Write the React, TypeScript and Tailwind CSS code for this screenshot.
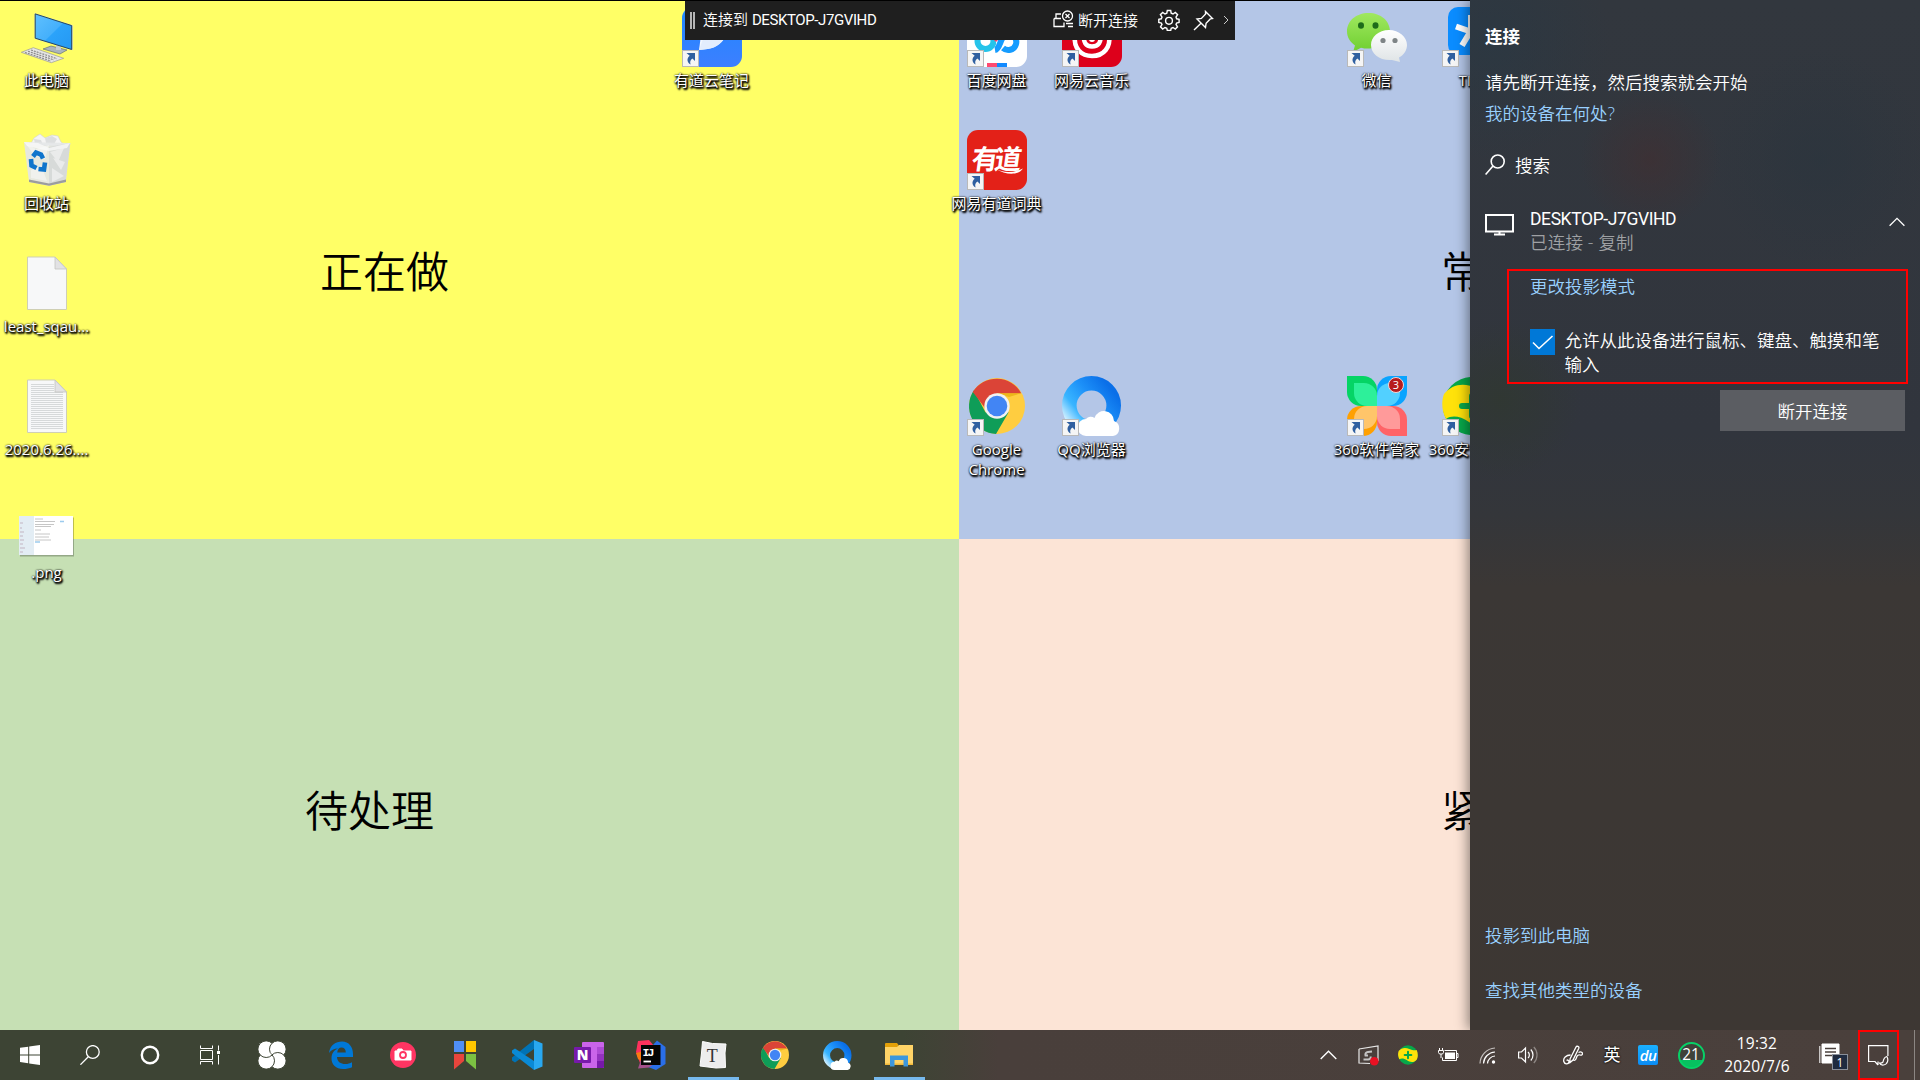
import type { ReactNode } from "react";

const FONT = "font-['Open_Sans','Noto_Sans_CJK_SC',sans-serif]";

/* ---------- shared artwork ---------- */

function ChromeArt() {
  return (
    <>
      <circle cx="30" cy="30" r="28" fill="#ffcd40" />
      <path d="M6.900 14.200A28 28 0 0 0 29 58L41.500 36.500L30 30L18.500 36.500Z" fill="#0f9d58" />
      <path d="M5.800 16A28 28 0 0 1 54.200 17.200L30 17.200L18 32Z" fill="#db4437" />
      <path d="M30 17.200L54.200 17.200L42 21Z" fill="#e0a800" opacity=".6" />
      <circle cx="30" cy="30" r="12.700" fill="#f1f1f1" />
      <circle cx="30" cy="30" r="10.300" fill="#4285f4" />
    </>
  );
}

function QQArt({ id }: { id: string }) {
  return (
    <>
      <defs>
        <linearGradient id={id} x1="0" y1="1" x2="1" y2="0.2">
          <stop offset="0" stopColor="#e8f8ff" />
          <stop offset=".3" stopColor="#39b5ff" />
          <stop offset=".65" stopColor="#1c8ff8" />
          <stop offset="1" stopColor="#0a6fe8" />
        </linearGradient>
      </defs>
      <circle cx="29.500" cy="29.500" r="22.200" fill="none" stroke={`url(#${id})`} strokeWidth="14.600" />
      <path d="M24 60a8.500 8.500 0 0 1 0-17a6 6 0 0 1 8.500-1a10 10 0 0 1 19.500 3a7.800 7.800 0 0 1-1 15z" fill="#fff" />
    </>
  );
}

function ShieldArt() {
  return (
    <>
      <circle cx="30" cy="30" r="29" fill="#07a84a" />
      <path d="M2 18C10 8 22 6 34 12C44 17 52 16 56 15C61 26 60 38 56 44C48 54 36 52 27 46C18 40 10 39 4 43C0 36-1 26 2 18Z" fill="#ffe20a" />
      <path d="M20 30h20M30 20v20" stroke="#07a84a" strokeWidth="6" strokeLinecap="round" />
    </>
  );
}

function ShortcutBadge() {
  return (
    <>
      <rect x=".5" y="43.500" width="16" height="16" fill="#f5f5f5" stroke="#b9b9b9" />
      <path d="M4.500 46h8.500v8l-2.600-2.500c-2.300 1.700-2.600 3.700-1.800 6-3.600-2.200-4.300-6-.9-8.800z" fill="#2f5fa0" />
    </>
  );
}

/* ---------- desktop icon drawings (60 x 60) ---------- */

const art: Record<string, ReactNode> = {
  pc: (
    <>
      <defs>
        <linearGradient id="pcs" x1="0" y1="0" x2="1" y2="1">
          <stop offset="0" stopColor="#5fc0ff" />
          <stop offset=".5" stopColor="#45b0fb" />
          <stop offset=".52" stopColor="#2ba3fa" />
          <stop offset="1" stopColor="#2598f3" />
        </linearGradient>
      </defs>
      <path d="M26 42l8-3 16 4-7 4z" fill="#aab4bd" stroke="#59636b" strokeWidth=".6" />
      <path d="M39 37h5v6h-5z" fill="#c4ccd2" />
      <path d="M17.700 6.300L55.700 18.300v25L17.700 31.700z" fill="#cfd6da" />
      <path d="M18.200 6.900L54.700 18.600v23.900L18.200 31.200z" fill="url(#pcs)" stroke="#26485f" strokeWidth="1" />
      <path d="M4.300 45.300L16.300 40.700L46.700 51.300L34.300 55.700z" fill="#e6e6e6" stroke="#999" strokeWidth=".7" />
      <path d="M8 45.500l26 8.500M11 44.300l26 8.600M14 43l26 8.700" stroke="#8b8b8b" strokeWidth="1.200" strokeDasharray="2 1" />
    </>
  ),
  bin: (
    <>
      <path d="M13 15l4-7 6-4 5 4 7-3 6 1 3 6 5 4z" fill="#f4f4f4" stroke="#d2d2d2" strokeWidth=".6" />
      <path d="M28 8l7-2 5 3-3 5-8-1zM17 9l7 1 2 5-8-1z" fill="#dcdedf" />
      <path d="M7 12L53.300 13L48.700 52L32 55.700L12 52z" fill="#e4e6e7" opacity=".93" />
      <path d="M32 17L53.300 13L48.700 52L32 55.700z" fill="#d3d6d7" opacity=".8" />
      <path d="M9 14l10 5 13-4-4 14-10-3zM33 22l14-4-6 14zM14 40l10-5 6 16-16-3zM35 38l12 8-12 6zM36 28l12 4-4 8z" fill="#f7f7f7" opacity=".6" />
      <path d="M12 49.500l20 4 17-4V52L32 55.700L12 52z" fill="#9b9d9e" />
      <path d="M7 12l14 1 11 5 21-5-3 5-18 3-22-5z" fill="#fafafa" opacity=".75" />
      <g fill="none" stroke="#0f75cc" strokeWidth="4.600">
        <path d="M16 26.500l3-4 5 2 2 4" />
        <path d="M14 29l.5 6.500 5 2.500" />
        <path d="M21.500 39l5.500.5 1-7" />
      </g>
    </>
  ),
  file: (
    <>
      <path d="M10.500 4H38l11.500 12v40.500h-39z" fill="#f7f8f9" stroke="#cfcfb4" strokeWidth="1" />
      <path d="M38 4v12h11.500z" fill="#e2e2e4" stroke="#c4c4c0" strokeWidth=".8" />
    </>
  ),
  text: (
    <>
      <path d="M10.500 4H38l11.500 12v40.500h-39z" fill="#f7f8f9" stroke="#cfcfb4" strokeWidth="1" />
      <path
        d="M14 8.500h23M14 10.500h23M14 12.500h23M14 14.500h23M14 16.500h32M14 18.500h32M14 20.500h32M14 22.500h32M14 24.500h32M14 26.500h32M14 28.500h32M14 30.500h32M14 32.500h32M14 34.500h32M14 36.500h32M14 38.500h32M14 40.500h32M14 42.500h32M14 44.500h32M14 46.500h32M14 48.500h32M14 50.500h32M14 52.500h32"
        stroke="#d6d9da"
        strokeWidth="1"
      />
      <path d="M38 4v12h11.500z" fill="#e2e2e4" stroke="#c4c4c0" strokeWidth=".8" />
    </>
  ),
  png: (
    <>
      <rect x="3" y="18.500" width="54" height="39" fill="#000" opacity=".25" />
      <rect x="2" y="17" width="54" height="39" fill="#fff" />
      <rect x="2" y="17" width="15" height="39" fill="#e3edf4" />
      <path d="M3 24h3M3 29h2M3 33h4M3 37h3M3 41h4M3 45h3M3 49h5M3 53h3" stroke="#c3b5c2" strokeWidth="1" />
      <path d="M18 20h8M18 22.500h20M18 25.500h19M18 27.500h16M18 31h6M18 35h15M18 38h14M18 41h16" stroke="#b8b8b8" strokeWidth=".8" />
      <path d="M43 22.500h4M18 43h5" stroke="#9ccbee" strokeWidth="1.500" />
    </>
  ),
  note: (
    <>
      <defs>
        <linearGradient id="nt" x1="0" y1="0" x2="0" y2="1">
          <stop offset="0" stopColor="#1e88ff" />
          <stop offset="1" stopColor="#3d7fff" />
        </linearGradient>
      </defs>
      <rect width="60" height="60" rx="11" fill="url(#nt)" />
      <path d="M42 32C36 40 30 42 17 43L19 28z" fill="#f3f7ff" />
      <path d="M17 43l4-11h21C36 40 30 42 17 43z" fill="#e3edfd" />
    </>
  ),
  baidu: (
    <>
      <rect width="60" height="60" rx="11" fill="#fff" />
      <circle cx="18.500" cy="34" r="8" fill="none" stroke="#25c3ea" strokeWidth="6" />
      <path d="M27 30l6-5 5 6-7 9z" fill="#fff" />
      <path d="M28 43C34 42 33 27 41 27A8 8 0 1 1 36 41" stroke="#159cff" strokeWidth="6" fill="none" />
      <path d="M24 30h10l-5 5z" fill="#f0436c" />
      <path d="M20 56h10v4H20z" fill="#ff4a70" />
      <path d="M30 56h10v4H30z" fill="#1089ff" />
    </>
  ),
  music: (
    <>
      <rect width="60" height="60" rx="11" fill="#dd001b" />
      <path d="M13 28C11 42 20 49 30 49C42 49 49 40 47 28" stroke="#fff" strokeWidth="4.500" fill="none" />
      <path d="M22 26C21 36 24 39.500 30 39.500C36 39.500 40 36 38 26" stroke="#fff" strokeWidth="4.500" fill="none" />
      <circle cx="30" cy="32" r="3" fill="#fff" />
    </>
  ),
  dict: (
    <>
      <rect width="60" height="60" rx="11" fill="#e32118" />
      <text x="30" y="39" textAnchor="middle" fontSize="27" fontWeight="700" fill="#fff" fontFamily="Noto Sans CJK SC" textLength="50" transform="skewX(-8) translate(4 0)">
        有道
      </text>
      <path d="M28 38.500C36 43 46 43 56 38.500C52 45 40 46 28 38.500Z" fill="#fff" />
    </>
  ),
  wechat: (
    <>
      <defs>
        <linearGradient id="wc" x1="0" y1="0" x2="0" y2="1">
          <stop offset="0" stopColor="#a0e860" />
          <stop offset="1" stopColor="#6fcf30" />
        </linearGradient>
        <linearGradient id="ww" x1="0" y1="0" x2="0" y2="1">
          <stop offset="0" stopColor="#fff" />
          <stop offset="1" stopColor="#dfe4e6" />
        </linearGradient>
      </defs>
      <path d="M21.500 6C9 6 0 14 0 24.500C0 30 3 35 8 38.500L6 45l8-4.300C26 44 43 38 43 24.500C43 14 34 6 21.500 6Z" fill="url(#wc)" />
      <path d="M42 23C31.500 23 24 30 24 38C24 47 33 54 45 53l8 2-1-4.500C57 48 60 43 60 38C60 30 52 23 42 23Z" fill="url(#ww)" />
      <ellipse cx="14" cy="18.500" rx="3" ry="3.200" fill="#1d6b1a" />
      <ellipse cx="28.500" cy="18.500" rx="3" ry="3.200" fill="#1d6b1a" />
      <circle cx="36" cy="33.500" r="2.600" fill="#7e8486" />
      <circle cx="48" cy="33.500" r="2.600" fill="#7e8486" />
    </>
  ),
  tim: (
    <>
      <rect x="6" width="54" height="48" rx="10" fill="#0a8cff" />
      <path d="M14 19.500l14.500 5L20 38.500M29 25V8" stroke="#fff" strokeWidth="6" fill="none" />
    </>
  ),
  chrome: <ChromeArt />,
  qq: <QQArt id="qqd" />,
  manager: (
    <>
      <path d="M0 0h16a14 14 0 0 1 14 14v16H14A14 14 0 0 1 0 16z" fill="#05d465" />
      <path d="M7 7h10a13 13 0 0 1 13 13v10H20A13 13 0 0 1 7 17z" fill="#2df09a" />
      <path d="M60 0H44a14 14 0 0 0-14 14v16h16a14 14 0 0 0 14-14z" fill="#0aa4ff" />
      <path d="M53 7H43a13 13 0 0 0-13 13v10h10a13 13 0 0 0 13-13z" fill="#52d0ff" />
      <path d="M0 60V44a14 14 0 0 1 14-14h16v16a14 14 0 0 1-14 14z" fill="#ffa000" />
      <path d="M7 53V43a13 13 0 0 1 13-13h10v10a13 13 0 0 1-13 13z" fill="#ffc56a" />
      <path d="M60 60H44a14 14 0 0 1-14-14V30h16a14 14 0 0 1 14 14z" fill="#ff6367" />
      <path d="M53 53H43a13 13 0 0 1-13-13V30h10a13 13 0 0 1 13 13z" fill="#ff9a9a" />
      <circle cx="49" cy="9" r="7.500" fill="#b71c1c" stroke="#f6d6d6" />
      <text x="49" y="13" textAnchor="middle" fontSize="11" fill="#fff" fontFamily="Open Sans">3</text>
    </>
  ),
  safe: <ShieldArt />,
};

type Item = { icon: string; label: string; pos: string; link?: boolean };

const items: Item[] = [
  { icon: "pc", label: "此电脑", pos: "left-[-15px] top-[7px]" },
  { icon: "bin", label: "回收站", pos: "left-[-15px] top-[130px]" },
  { icon: "file", label: "least_sqau...", pos: "left-[-15px] top-[253px]" },
  { icon: "text", label: "2020.6.26....", pos: "left-[-15px] top-[376px]" },
  { icon: "png", label: ".png", pos: "left-[-15px] top-[499px]" },
  { icon: "note", label: "有道云笔记", pos: "left-[650px] top-[7px]", link: true },
  { icon: "baidu", label: "百度网盘", pos: "left-[935px] top-[7px]", link: true },
  { icon: "music", label: "网易云音乐", pos: "left-[1030px] top-[7px]", link: true },
  { icon: "dict", label: "网易有道词典", pos: "left-[935px] top-[130px]", link: true },
  { icon: "wechat", label: "微信", pos: "left-[1315px] top-[7px]", link: true },
  { icon: "tim", label: "TIM", pos: "left-[1410px] top-[7px]", link: true },
  { icon: "chrome", label: "Google Chrome", pos: "left-[935px] top-[376px]", link: true },
  { icon: "qq", label: "QQ浏览器", pos: "left-[1030px] top-[376px]", link: true },
  { icon: "manager", label: "360软件管家", pos: "left-[1315px] top-[376px]", link: true },
  { icon: "safe", label: "360安全卫士", pos: "left-[1410px] top-[376px]", link: true },
];

function DesktopIcon({ icon, label, pos, link }: Item) {
  return (
    <div className={`absolute flex w-[124px] flex-col items-center gap-[3px] ${pos}`}>
      <svg width="60" height="60" viewBox="0 0 60 60" className="overflow-visible">
        {art[icon]}
        {link && <ShortcutBadge />}
      </svg>
      <span
        className={`mr-[1px] text-center text-[15px] leading-5 text-white [text-shadow:1px_1px_2px_#000,1px_1px_2px_#000,1px_2px_2px_#000,0_0_2px_#000] ${
          icon === "chrome" ? "w-[70px]" : "whitespace-nowrap"
        }`}
      >
        {label}
      </span>
    </div>
  );
}

/* ---------- remote connection bar ---------- */

function ConnectionBar() {
  return (
    <div className="absolute left-[685px] top-0 flex h-10 w-[550px] items-center bg-[#1f1f1f] text-[15px] font-[350] text-white">
      <div className="ml-[5px] h-[17px] w-[5px] border-x-2 border-[#b5b5b5]" />
      <span className="ml-[8px] whitespace-nowrap">
        连接到 <span className="inline-block font-['Roboto'] text-[15px] font-normal tracking-[-0.4px]">DESKTOP-J7GVIHD</span>
      </span>
      <div className="ml-auto flex items-center">
        <svg width="21" height="20" viewBox="0 0 21 20" fill="none" stroke="#fff" strokeWidth="1.300">
          <path d="M8 4H3v4M1 8.500h5M1 8.500v8h10v-4M5 8.500h3M13 13.500h7M15 16.500h5" />
          <circle cx="14.500" cy="6" r="5" />
          <path d="M12.500 4l4 4M16.500 4l-4 4" />
        </svg>
        <span className="ml-1">断开连接</span>
        <svg className="ml-[20px]" width="22" height="22" viewBox="0 0 22 22" fill="none" stroke="#fff" strokeWidth="1.400">
          <path d="M9.300 1.500h3.400l.5 2.700 1.800.8 2.300-1.600 2.300 2.300L18 8l.7 1.800 2.400.5v3.200l-2.500.5L18 15.500l1.500 2.300-2.200 2.200-2.300-1.500-1.800.8-.5 2.200H9.300l-.5-2.200L7 18.500 4.700 20l-2.200-2.200L4 15.500 3.300 14l-2.500-.5v-3.200l2.500-.5L4 8 2.400 5.700l2.300-2.300L7 5l1.800-.8z" />
          <circle cx="11" cy="11.800" r="3.400" />
        </svg>
        <svg className="ml-[13px]" width="21" height="21" viewBox="0 0 21 21" fill="none" stroke="#fff" strokeWidth="1.400">
          <path d="M12.500 1.500l7 7-2.200.4-4.200 4.300-.6 4.300-8.500-8.500 4.400-.6 4.200-4.300zM8 13.200L1 20" />
        </svg>
        <svg className="ml-[9px] mr-[6px]" width="6" height="10" viewBox="0 0 6 10" fill="none" stroke="#ccc">
          <path d="M1 1l4 4-4 4" />
        </svg>
      </div>
    </div>
  );
}

/* ---------- connect panel ---------- */

function ConnectPanel() {
  return (
    <aside className="relative flex h-[1030px] w-[450px] shrink-0 flex-col bg-[radial-gradient(circle_at_180px_160px,rgba(66,46,48,.6),transparent_70px),radial-gradient(circle_at_350px_160px,rgba(40,52,62,.5),transparent_110px),radial-gradient(circle_at_20px_40px,rgba(40,56,68,.6),transparent_120px),radial-gradient(circle_at_30px_400px,rgba(48,56,48,.8),transparent_80px),linear-gradient(#32373e_0,#31353d_42%,#34363a_50%,#3b3735_57%,#3d3733_100%)] text-[17.5px] font-[350] leading-[24px] text-white shadow-[-2px_0_12px_rgba(0,0,0,.45)]">
      <h1 className="ml-[15px] mt-[24px] font-bold">连接</h1>
      <p className="ml-[15px] mt-[22px]">请先断开连接，然后搜索就会开始</p>
      <a className="ml-[15px] mt-[7px] text-[#99d1ff]">我的设备在何处?</a>
      <div className="ml-[15px] mt-[28px] flex items-center gap-[10px]">
        <svg width="20" height="22" viewBox="0 0 20 22" fill="none" stroke="#fff" strokeWidth="1.600">
          <circle cx="12.700" cy="7.500" r="6.500" />
          <path d="M8 12L.6 20.500" />
        </svg>
        <span>搜索</span>
      </div>
      <div className="ml-[15px] mr-[15px] mt-[31px] flex h-[46px]">
        <svg className="mt-[5px]" width="29" height="24" viewBox="0 0 29 24" fill="none" stroke="#fff" strokeWidth="2">
          <path d="M1 2h27v16.500H1zM14.500 18v4M9 21.500h11" />
        </svg>
        <div className="ml-[16px] flex flex-col leading-[23px]">
          <span className="font-['Roboto'] text-[17.5px] font-normal tracking-[-0.4px]">DESKTOP-J7GVIHD</span>
          <span className="tracking-[0.2px] text-[#9fa1a4]">已连接 - 复制</span>
        </div>
        <svg className="ml-auto mt-[9px]" width="16" height="10" viewBox="0 0 16 10" fill="none" stroke="#fff" strokeWidth="1.300">
          <path d="M.6 8.700L8 1.300l7.400 7.400" />
        </svg>
      </div>
      <div className="ml-[37px] mt-[15px] flex h-[115px] w-[401px] flex-col border-2 border-[#ff0000] pl-[21px]">
        <a className="mt-[3px] text-[#99d1ff]">更改投影模式</a>
        <div className="mt-[31px] flex items-start">
          <svg width="25" height="26" viewBox="0 0 25 26" className="shrink-0">
            <rect width="25" height="26" fill="#0078d7" />
            <path d="M3 13.500l6 6L22.500 7" fill="none" stroke="#fff" strokeWidth="1.600" />
          </svg>
          <span className="ml-[9.500px] mt-[-1px] w-[324px] whitespace-nowrap">
            允许从此设备进行鼠标、键盘、触摸和笔
            <br />
            输入
          </span>
        </div>
      </div>
      <button className="ml-[250px] mt-[6px] h-[41px] w-[185px] bg-[#5b5d62]">断开连接</button>
      <div className="mb-[28px] ml-[15px] mt-auto flex flex-col gap-[31px] text-[#99d1ff]">
        <a>投影到此电脑</a>
        <a>查找其他类型的设备</a>
      </div>
    </aside>
  );
}

/* ---------- taskbar ---------- */

const petals: [number, number][] = [
  [8.2, 8.2],
  [19.8, 8.2],
  [19.8, 19.8],
  [8.2, 19.8],
];

function PinwheelIcon() {
  return (
    <svg width="28" height="28" viewBox="0 0 28 28">
      <defs>
        <clipPath id="halfPetal">
          <path d="M-2-2L16 16V30H-2z" />
        </clipPath>
      </defs>
      <g fill="#fff" stroke="#3d4434" strokeWidth="1">
        {petals.map(([x, y]) => (
          <circle key={`${x}-${y}`} cx={x} cy={y} r="8.300" />
        ))}
        <circle cx="8.200" cy="8.200" r="8.300" clipPath="url(#halfPetal)" />
      </g>
    </svg>
  );
}

const pinned: { key: string; node: ReactNode; active?: boolean }[] = [
  {
    key: "edge",
    node: (
      <svg width="26" height="28" viewBox="0 0 26 28">
        <path d="M1 12C2 4 8 .5 14 .5C21 .5 25 6 25 13v3H9c.3 5 4 7 8 7 3 0 5-.7 7-1.800v5C21.500 27.300 18.500 28 15 28 8 28 3.500 23.500 3.500 17.500 3.500 12.500 6 9 10 7.500 6 7.500 3 9 1 12zM9.200 11.500h8.600C17.800 8 16 6.500 13.500 6.500S9.700 8.300 9.200 11.500z" fill="#0078d7" />
      </svg>
    ),
  },
  {
    key: "camera",
    node: (
      <svg width="26" height="26" viewBox="0 0 26 26">
        <circle cx="13" cy="13" r="13" fill="#ff3562" />
        <path d="M5 9h2l1-2h4l1 2h8v9H5z" fill="#fff" stroke="#fff" strokeLinejoin="round" />
        <circle cx="13" cy="13" r="3" fill="none" stroke="#ff3562" strokeWidth="1.800" />
      </svg>
    ),
  },
  {
    key: "bookmarks",
    node: (
      <svg width="22" height="29" viewBox="0 0 22 29">
        <path d="M0 0h10v11H0z" fill="#4f8ff7" />
        <path d="M12 0h10v11H12z" fill="#ffc700" />
        <path d="M0 13h10v7L0 28.500z" fill="#e8453c" />
        <path d="M12 13h10v15.500L12 20z" fill="#7cc142" />
      </svg>
    ),
  },
  {
    key: "vscode",
    node: (
      <svg width="31" height="30" viewBox="0 0 31 30">
        <path d="M22 0v9L3 22.500 0 20.500V17.500z" fill="#0073b6" />
        <path d="M3 8.500L0 10.500v2.500L22 30V21z" fill="#0a8ad6" />
        <path d="M22 0l8.500 3.500v23L22 30V0z" fill="#29a8f0" />
      </svg>
    ),
  },
  {
    key: "onenote",
    node: (
      <svg width="30" height="26" viewBox="0 0 30 26">
        <rect x="8" width="22" height="26" rx="1" fill="#ca64ea" />
        <path d="M23 5h7v7h-7z" fill="#ae4bd5" />
        <path d="M23 12h7v7h-7z" fill="#9332bf" />
        <path d="M23 19h7v6a1 1 0 0 1-1 1h-6z" fill="#7719aa" />
        <rect y="5" width="17" height="16" rx="1" fill="#7719aa" />
        <text x="8.500" y="18" textAnchor="middle" fontSize="14" fontWeight="800" fill="#fff" fontFamily="Open Sans">N</text>
      </svg>
    ),
  },
  {
    key: "idea",
    node: (
      <svg width="30" height="30" viewBox="0 0 30 30">
        <path d="M2 1l11-1 5 6-8 16-6 1-4-11z" fill="#fe315d" />
        <path d="M0 13l8-2v12l-6-4z" fill="#f97a12" />
        <path d="M17 5l4-4.500 8.500 6.500v17l-9.500 6-8-3-4-6z" fill="#2a6fe8" />
        <path d="M2 28.500l3-9 12 5-4 3z" fill="#a4508b" />
        <rect x="5" y="5" width="19.500" height="20" fill="#050505" />
        <text x="6.500" y="16" fontSize="11.500" fontWeight="700" fill="#fff" fontFamily="Liberation Mono" textLength="12">IJ</text>
        <path d="M7.500 21.500h7.500" stroke="#fff" strokeWidth="1.800" />
      </svg>
    ),
  },
  {
    key: "typora",
    active: true,
    node: (
      <svg width="28" height="28" viewBox="0 0 28 28">
        <path d="M3.500 .5l10 2 13.500 .5-1 9 .5 14.500-9.500 .5-16-2L2.500 12z" fill="#ededed" stroke="#fff" strokeLinejoin="round" />
        <text x="13.300" y="20.500" textAnchor="middle" fontSize="18" fill="#333" fontFamily="Liberation Serif">T</text>
      </svg>
    ),
  },
  {
    key: "chrome",
    node: (
      <svg width="30" height="30" viewBox="0 0 60 60">
        <ChromeArt />
      </svg>
    ),
  },
  {
    key: "qq",
    node: (
      <svg width="29" height="29" viewBox="0 0 60 60">
        <QQArt id="qqt" />
      </svg>
    ),
  },
  {
    key: "explorer",
    active: true,
    node: (
      <svg width="28" height="24" viewBox="0 0 28 24">
        <path d="M0 1a1 1 0 0 1 1-1h11l1.500 2v3H0z" fill="#e3a008" />
        <path d="M0 4h12l2-2h14v20H0z" fill="#ffd467" />
        <path d="M0 20.500h28V22H0z" fill="#f0b93a" />
        <path d="M5 23.500V12.500h18v11h-4.500V17h-9v6.500z" fill="#3c97dd" />
      </svg>
    ),
  },
];

function Cell({ w, children }: { w: string; children: ReactNode }) {
  return <div className={`flex h-full shrink-0 items-center justify-center ${w}`}>{children}</div>;
}

function Taskbar() {
  return (
    <footer className="relative flex h-[50px] w-full items-center bg-[linear-gradient(90deg,#3d4434_0,#3d4434_47%,#493f3b_52%,#4a403c_100%)] text-white">
      <Cell w="w-[60px]">
        <svg width="20" height="20" viewBox="0 0 20 20" fill="#fff">
          <path d="M0 2.800L8.200 1.700v7.700H0zM9.200 1.500L20 0v9.400H9.200zM0 10.400h8.200v7.800L0 17.100zM9.200 10.400H20V20L9.200 18.400z" />
        </svg>
      </Cell>
      <Cell w="w-[60px]">
        <svg width="20" height="20" viewBox="0 0 20 20" fill="none" stroke="#fff" strokeWidth="1.300">
          <circle cx="12.800" cy="7" r="6.400" />
          <path d="M8.300 11.800L.4 19.700" />
        </svg>
      </Cell>
      <Cell w="w-[60px]">
        <svg width="20" height="20" viewBox="0 0 20 20" fill="none" stroke="#fff" strokeWidth="2.400">
          <circle cx="10" cy="10" r="8.200" />
        </svg>
      </Cell>
      <Cell w="w-[60px]">
        <svg width="20" height="20" viewBox="0 0 20 20" fill="none" stroke="#fff" strokeWidth="1">
          <path d="M.5 .5v3h12v-3M.5 5.500h12v9H.5zM.5 19.500v-3h12v3M18.500 .5v5M18.500 10v9.500" />
          <path d="M17 6h3v3h-3z" fill="#fff" stroke="none" />
        </svg>
      </Cell>
      <Cell w="w-[64px]">
        <PinwheelIcon />
      </Cell>
      <div className="ml-[6px] flex h-full">
        {pinned.map((p) => (
          <div key={p.key} className="relative flex w-[62px] items-center justify-center">
            {p.node}
            {p.active && <div className="absolute bottom-0 left-[6px] h-[3px] w-[51px] bg-[#76b9ed]" />}
          </div>
        ))}
      </div>
      <div className="ml-auto flex h-full">
        <Cell w="w-10">
          <svg width="17" height="10" viewBox="0 0 17 10" fill="none" stroke="#fff" strokeWidth="1.400">
            <path d="M.7 9L8.500 1.200 16.300 9" />
          </svg>
        </Cell>
        <Cell w="w-10">
          <svg width="21" height="21" viewBox="0 0 21 21" fill="none" stroke="#e8e8e8" strokeWidth="1.200">
            <path d="M1 4l19-3v15M1 4v14l11 .5" />
            <path d="M14 6.500l-4 .5c-2 .3-3 1.500-2.500 3.500H10M5.500 14.500H10c2 0 3-1 2.500-3" strokeWidth="2" stroke="#c4c4c4" />
            <circle cx="16.300" cy="16.300" r="4.300" fill="#e81123" stroke="none" />
          </svg>
        </Cell>
        <Cell w="w-10">
          <svg width="20" height="20" viewBox="0 0 60 60">
            <ShieldArt />
          </svg>
        </Cell>
        <Cell w="w-10">
          <svg width="21" height="14" viewBox="0 0 21 14" fill="none" stroke="#fff">
            <path d="M6.500 2.500h12v10H4.500v-3M18.500 5.500h1.500v4h-1.500" />
            <path d="M7 4.500h10v6.500H7z" fill="#fff" stroke="none" />
            <path d="M1.500 0v2.500M4.500 0v2.500M.5 2.500h5v2l-1 1.500h-3l-1-1.500zM3 6v4" />
          </svg>
        </Cell>
        <Cell w="w-10">
          <svg width="18" height="18" viewBox="0 0 18 18" fill="none" stroke="#fff" strokeWidth="1.200">
            <path d="M1 17.500A16 16 0 0 1 16 2" stroke="#c4c0be" />
            <path d="M4.500 17.500A12 12 0 0 1 16 6M8.500 17.500A8 8 0 0 1 16 10" />
            <circle cx="14.500" cy="16" r="1.700" fill="#fff" stroke="none" />
          </svg>
        </Cell>
        <Cell w="w-10">
          <svg width="20" height="18" viewBox="0 0 20 18" fill="none" stroke="#fff" strokeWidth="1.200">
            <path d="M.6 6h2.900l4-4v14l-4-4H.6z" />
            <path d="M10 6a4 4 0 0 1 0 6M12.800 3.500a8 8 0 0 1 0 11" />
            <path d="M15.800 1a11.500 11.500 0 0 1 0 16" stroke="#8e8784" />
          </svg>
        </Cell>
        <Cell w="w-[50px]">
          <svg width="20" height="20" viewBox="0 0 20 20" fill="none" stroke="#fff" strokeWidth="1.300">
            <path d="M7 14L13 2c.8-1.500 3.500-.5 2.800 1.300L10 15l-3 2.500zM7.500 10C3 10 0 13 .8 16.500c.7 3 4.700 3 5.200.5.300-1.800-1.500-2.500-2.300-1.400M10 15c2 1 3-.5 3.500-2.500s2-3 3.500-2.500 2.500 0 2.500-1.500-2-2-4-1" />
          </svg>
        </Cell>
        <Cell w="w-7">
          <span className="text-[17px] leading-5 [text-shadow:0_0_2px_#000,0_0_2px_#000]">英</span>
        </Cell>
        <Cell w="w-11">
          <div className="flex h-5 w-5 items-center justify-center rounded-[2px] bg-[linear-gradient(#1ab0ff,#0a8cf5)] text-[15px] font-semibold italic leading-none tracking-[-0.5px]">
            du
          </div>
        </Cell>
        <Cell w="w-[42px]">
          <div className="flex h-[27px] w-[27px] items-center justify-center rounded-full border-2 border-[#07d167] bg-[linear-gradient(#3f4239_68%,#07c160_68%)] text-[15.5px] leading-none">
            21
          </div>
        </Cell>
        <Cell w="w-[90px]">
          <div className="flex flex-col items-center text-[15.5px] leading-[23px] tracking-[0.15px]">
            <span>19:32</span>
            <span>2020/7/6</span>
          </div>
        </Cell>
        <Cell w="w-[56px]">
          <svg width="30" height="28" viewBox="0 0 30 28" className="ml-[8px] mt-[3px]">
            <path d="M3 1h17v19H3zM.8 3v17" fill="#fff" stroke="#fff" />
            <path d="M6 5.500h11M6 9h11M6 12.500h8" stroke="#4a403c" strokeWidth="1.500" />
            <rect x="13.500" y="11.500" width="15" height="15" fill="#1f2b40" stroke="#8a8f99" />
            <text x="21" y="23.500" textAnchor="middle" fontSize="12" fill="#fff" fontFamily="Open Sans">1</text>
          </svg>
        </Cell>
        <div className="flex h-full w-[41px] items-center justify-center border-2 border-[#ff0000]">
          <svg width="21" height="21" viewBox="0 0 21 21" fill="none" stroke="#fff" strokeWidth="1.200">
            <path d="M10 20l-3-3.500H.6V.6h19.300V11M10 20v-3.500" />
            <path d="M18.800 11.500c2 3 1 8-3.300 8.500-2 .2-3.500-.8-4-2 1.500.3 2.500 0 3.500-1 .5-2.500 1.500-5 3.800-5.500z" />
          </svg>
        </div>
        <div className="ml-[15px] mr-[5px] h-full w-px bg-[#8c8683]" />
      </div>
    </footer>
  );
}

/* ---------- desktop ---------- */

const BIG = "absolute whitespace-nowrap text-[43px] font-[350] leading-[60px] text-black";

export default function App() {
  return (
    <div className={`flex h-[1080px] w-[1920px] flex-col overflow-hidden ${FONT}`}>
      <div className="flex h-[1030px]">
        <main className="relative h-full w-[1470px] shrink-0 overflow-hidden border-t border-black">
          <div className="grid h-full w-[1920px] grid-cols-[959px_961px] grid-rows-[538px_491px]">
            <section className="bg-[#ffff66]" />
            <section className="bg-[#b4c6e7]" />
            <section className="bg-[#c6e0b4]" />
            <section className="bg-[#fce4d6]" />
          </div>
          <div className="absolute left-0 top-[-1px] h-full w-full">
            <span className={`${BIG} left-[320px] top-[242px]`}>正在做</span>
            <span className={`${BIG} left-[1441px] top-[242px]`}>常用</span>
            <span className={`${BIG} left-[305px] top-[781px]`}>待处理</span>
            <span className={`${BIG} left-[1441px] top-[781px]`}>紧急</span>
            {items.map((i) => (
              <DesktopIcon key={i.label} {...i} />
            ))}
            <ConnectionBar />
          </div>
        </main>
        <ConnectPanel />
      </div>
      <Taskbar />
    </div>
  );
}
